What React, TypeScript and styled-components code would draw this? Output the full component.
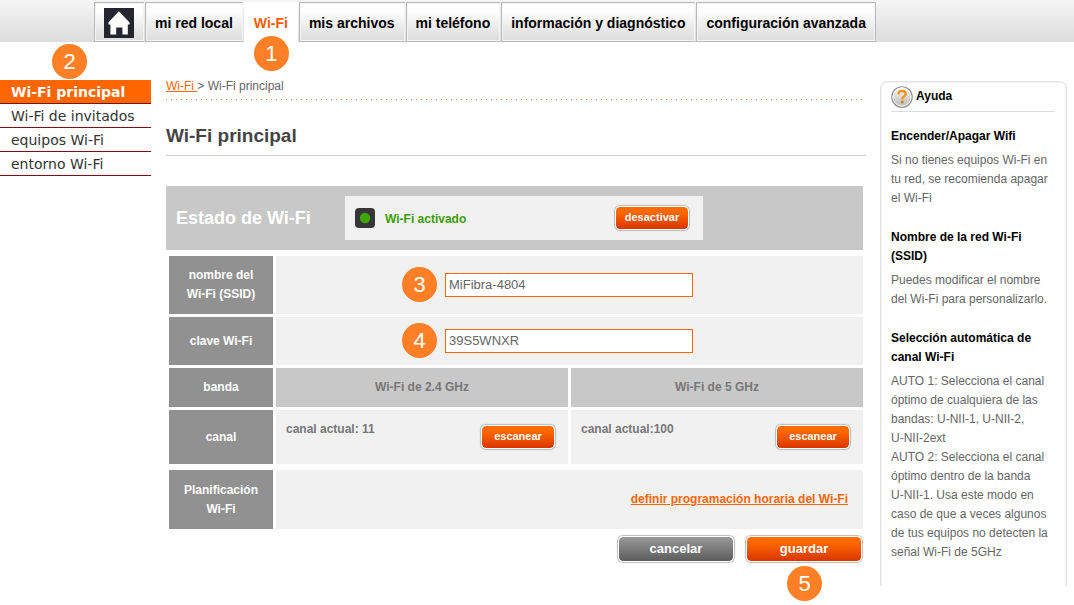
import React from 'react';
import styled, { createGlobalStyle, css } from 'styled-components';

const GlobalStyle = createGlobalStyle`
  * { box-sizing: border-box; }
  body {
    margin: 0;
    background: #fff;
    color: #666;
    font: 12px/19px "Liberation Sans", Arial, Helvetica, sans-serif;
  }
  h1, h2, h3, p, ul { margin: 0; padding: 0; }
`;

const Header = styled.header`
  display: flex;
  height: 42px;
  padding: 2px 0 0 94px;
  background: linear-gradient(#f5f5f5, #dcdcdc);
`;

const Tabs = styled.nav`
  display: flex;
`;

const Tab = styled.a<{ $active?: boolean }>`
  display: flex;
  align-items: center;
  margin-right: 1px;
  padding: 2px 10px 0 9px;
  border: 1px solid #b9b9b9;
  border-right: 0;
  box-shadow: inset 0 0 0 1px #f4f4f4;
  background: linear-gradient(#fff 20%, #ececec 60%, #dcdcdc);
  color: #000;
  font-size: 14px;
  font-weight: bold;
  text-decoration: none;
  white-space: nowrap;
  &:last-child {
    margin-right: 0;
    padding-right: 9px;
    border-right: 1px solid #b9b9b9;
  }
  ${(p) =>
    p.$active &&
    css`
      position: relative;
      padding: 2px 10px 0 9px;
      border-color: #fff;
      background: #fff;
      box-shadow: none;
      color: #ff5a00;
    `}
`;

const Body = styled.div`
  display: flex;
  align-items: flex-start;
  padding: 0 7px 19px 0;
`;

const Side = styled.nav`
  position: relative;
  flex: 0 0 151px;
  padding-top: 38px;
`;

const SideLink = styled.a<{ $active?: boolean }>`
  display: block;
  height: 24px;
  padding-left: 11px;
  border-bottom: 1px solid #7d1010;
  color: #333;
  font: 14px/24px "DejaVu Sans", Verdana, sans-serif;
  text-decoration: none;
  white-space: nowrap;
  ${(p) =>
    p.$active &&
    css`
      background: #ff6600;
      color: #fff;
      font-weight: bold;
    `}
`;

const Main = styled.main`
  flex: 1;
  min-width: 0;
  margin: 35px 14px 0 15px;
`;

const Crumbs = styled.div`
  height: 23px;
  margin-right: 3px;
  background: repeating-linear-gradient(to right, #e87a3a 0 1px, transparent 1px 5px) left bottom / 100% 1px no-repeat;
  a { color: #ff6600; }
`;

const Title = styled.h1`
  height: 56px;
  border-bottom: 1px solid #ccc;
  color: #444;
  font-size: 19px;
  line-height: 72px;
`;

const Status = styled.section`
  display: flex;
  align-items: center;
  height: 64px;
  margin: 30px 3px 3px 0;
  padding-left: 10px;
  background: #c8c8c8;
`;

const StatusTitle = styled.h2`
  flex: 0 0 169px;
  color: #fff;
  font-size: 18px;
`;

const StatusPanel = styled.div`
  display: flex;
  align-items: center;
  gap: 10px;
  width: 358px;
  height: 44px;
  padding: 0 14px 0 10px;
  background: #f1f1f1;
`;

const StatusText = styled.strong`
  flex: 1;
  padding-top: 2px;
  color: #3a9e00;
`;

const Button = styled.button<{ $large?: boolean; $gray?: boolean }>`
  width: ${(p) => (p.$large ? 116 : 74)}px;
  height: ${(p) => (p.$large ? 26 : 24)}px;
  padding: 0 0 2px;
  border: 1px solid #fff;
  border-radius: 5px;
  box-shadow: 0 0 1px 1px #bbb;
  background: ${(p) => (p.$gray ? 'linear-gradient(#999, #5c5c5c)' : 'linear-gradient(#ff6a00 20%, #d93600)')};
  background-clip: padding-box;
  color: #fff;
  font: bold ${(p) => (p.$large ? 13 : 11)}px "Liberation Sans", Arial, sans-serif;
`;

const Table = styled.table`
  width: 100%;
  border-collapse: separate;
  border-spacing: 3px;
  table-layout: fixed;
  td, th { padding: 0; }
`;

const LabelCol = styled.col`
  width: 104px;
`;

const Row = styled.tr<{ $height: number }>`
  height: ${(p) => p.$height}px;
`;

const Label = styled.th`
  background: #919191;
  color: #fff;
`;

const Band = styled.th`
  background: #c8c8c8;
  color: #777;
`;

const Cell = styled.td`
  background: #f1f1f1;
`;

const Field = styled.div`
  position: relative;
  width: 248px;
  margin: 0 auto 0 169px;
`;

const Input = styled.input`
  display: block;
  width: 100%;
  height: 24px;
  padding: 0 3px 2px;
  border: 1px solid #ff6600;
  background: #fff;
  color: #666;
  font: 13px "Liberation Sans", Arial, sans-serif;
`;

const Channel = styled.div`
  display: flex;
  justify-content: space-between;
  align-items: center;
  padding: 0 13px 0 10px;
  color: #777;
  font-weight: bold;
  span { align-self: flex-start; margin-top: -5px; }
`;

const Schedule = styled.div`
  padding-right: 15px;
  text-align: right;
  font-weight: bold;
  a { color: #ff6600; }
`;

const Actions = styled.div`
  display: flex;
  justify-content: flex-end;
  gap: 12px;
  padding: 4px 4px 0 0;
`;

const ActionWrap = styled.div`
  position: relative;
`;

const Help = styled.aside`
  flex: 0 0 187px;
  margin-top: 39px;
  padding: 0 11px 4px 10px;
  border: 1px solid #e2e2e2;
  border-bottom: 0;
  border-radius: 7px 7px 0 0;
  box-shadow: inset 1px 1px 0 #f4f4f4, inset -1px 0 0 #f4f4f4;
`;

const HelpHead = styled.h2`
  display: flex;
  align-items: center;
  gap: 3px;
  height: 30px;
  margin-bottom: 15px;
  border-bottom: 1px solid #ddd;
  color: #000;
  font-size: 12px;
`;

const HelpItem = styled.section`
  margin: 0 -3px 20px 0;
  h3 {
    margin-bottom: 5px;
    color: #000;
    font-size: 12px;
  }
`;

const Badge = styled.span<{ $x: number; $y: number }>`
  position: absolute;
  z-index: 1;
  left: ${(p) => p.$x}px;
  top: ${(p) => p.$y}px;
  width: 35px;
  height: 35px;
  border-radius: 50%;
  background: #ff7f27;
  color: #fff;
  font: 22px/35px "Liberation Sans", Arial, sans-serif;
  text-align: center;
`;

const HomeIcon = () => (
  <svg width="30" height="30" viewBox="0 0 30 30" role="img" aria-label="inicio">
    <rect width="30" height="30" fill="#25252f" />
    <path d="M14.8 3.2 L25.6 14.6 V16.4 H23.8 V26.6 H18.4 V19.6 H12.2 V26.6 H6.4 V16.4 H4.4 V14.6 Z" fill="#fff" />
  </svg>
);

const HelpIcon = () => (
  <svg width="22" height="22" viewBox="0 0 23 23" aria-hidden="true">
    <defs>
      <linearGradient id="knob" x1="0" y1="0" x2="0" y2="1">
        <stop offset="0" stopColor="#fafafa" />
        <stop offset="1" stopColor="#b8b8b8" />
      </linearGradient>
    </defs>
    <circle cx="11.5" cy="11.5" r="10.7" fill="url(#knob)" stroke="#8f8f8f" strokeWidth="1.2" />
    <circle cx="11.5" cy="11.5" r="9.5" fill="none" stroke="#fff" strokeWidth="1" />
    <path d="M8 9 V7.8 C8 4.4 15.4 4.2 15.4 8.2 C15.4 11 11.8 10.8 11.8 14" fill="none" stroke="#f0961a" strokeWidth="2.5" />
    <rect x="10.4" y="15.4" width="2.8" height="2.7" fill="#d9820c" />
  </svg>
);

export default function App() {
  return (
    <>
      <GlobalStyle />
      <Header>
        <Tabs>
          <Tab href="#inicio"><HomeIcon /></Tab>
          <Tab href="#red">mi red local</Tab>
          <Tab href="#wifi" $active>
            Wi-Fi
            <Badge $x={9} $y={33}>1</Badge>
          </Tab>
          <Tab href="#archivos">mis archivos</Tab>
          <Tab href="#telefono">mi teléfono</Tab>
          <Tab href="#diagnostico">información y diagnóstico</Tab>
          <Tab href="#avanzada">configuración avanzada</Tab>
        </Tabs>
      </Header>
      <Body>
        <Side>
          <Badge $x={52} $y={2}>2</Badge>
          <SideLink href="#principal" $active>Wi-Fi principal</SideLink>
          <SideLink href="#invitados">Wi-Fi de invitados</SideLink>
          <SideLink href="#equipos">equipos Wi-Fi</SideLink>
          <SideLink href="#entorno">entorno Wi-Fi</SideLink>
        </Side>
        <Main>
          <Crumbs>
            <a href="#wifi">Wi-Fi&nbsp;</a>&gt; Wi-Fi principal
          </Crumbs>
          <Title>Wi-Fi principal</Title>
          <Status>
            <StatusTitle>Estado de Wi-Fi</StatusTitle>
            <StatusPanel>
              <svg width="20" height="20" viewBox="0 0 20 20" aria-hidden="true">
                <rect width="20" height="20" rx="4" fill="#363636" />
                <circle cx="10" cy="10" r="5.2" fill="#3fa800" />
              </svg>
              <StatusText>Wi-Fi activado</StatusText>
              <Button type="button">desactivar</Button>
            </StatusPanel>
          </Status>
          <Table>
            <colgroup>
              <LabelCol />
              <col />
              <col />
            </colgroup>
            <tbody>
              <Row $height={58}>
                <Label scope="row"><label htmlFor="ssid">nombre del<br />Wi-Fi (SSID)</label></Label>
                <Cell colSpan={2}>
                  <Field>
                    <Badge $x={-43} $y={-6}>3</Badge>
                    <Input id="ssid" defaultValue="MiFibra-4804" />
                  </Field>
                </Cell>
              </Row>
              <Row $height={48}>
                <Label scope="row"><label htmlFor="clave">clave Wi-Fi</label></Label>
                <Cell colSpan={2}>
                  <Field>
                    <Badge $x={-43} $y={-6}>4</Badge>
                    <Input id="clave" defaultValue="39S5WNXR" />
                  </Field>
                </Cell>
              </Row>
              <Row $height={39}>
                <Label scope="row">banda</Label>
                <Band scope="col">Wi-Fi de 2.4 GHz</Band>
                <Band scope="col">Wi-Fi de 5 GHz</Band>
              </Row>
              <Row $height={54}>
                <Label scope="row">canal</Label>
                <Cell>
                  <Channel><span>canal actual: 11</span><Button type="button">escanear</Button></Channel>
                </Cell>
                <Cell>
                  <Channel><span>canal actual:100</span><Button type="button">escanear</Button></Channel>
                </Cell>
              </Row>
            </tbody>
          </Table>
          <Table>
            <colgroup>
              <LabelCol />
              <col />
            </colgroup>
            <tbody>
              <Row $height={59}>
                <Label scope="row">Planificación<br />Wi-Fi</Label>
                <Cell>
                  <Schedule><a href="#horario">definir programación horaria del Wi-Fi</a></Schedule>
                </Cell>
              </Row>
            </tbody>
          </Table>
          <Actions>
            <Button type="button" $large $gray>cancelar</Button>
            <ActionWrap>
              <Button type="submit" $large>guardar</Button>
              <Badge $x={41} $y={30}>5</Badge>
            </ActionWrap>
          </Actions>
        </Main>
        <Help>
          <HelpHead><HelpIcon />Ayuda</HelpHead>
          <HelpItem>
            <h3>Encender/Apagar Wifi</h3>
            <p>Si no tienes equipos Wi-Fi en tu red, se recomienda apagar el Wi-Fi</p>
          </HelpItem>
          <HelpItem>
            <h3>Nombre de la red Wi-Fi (SSID)</h3>
            <p>Puedes modificar el nombre del Wi-Fi para personalizarlo.</p>
          </HelpItem>
          <HelpItem>
            <h3>Selección automática de canal Wi-Fi</h3>
            <p>
              AUTO 1: Selecciona el canal óptimo de cualquiera de las bandas: U-NII-1, U-NII-2,
              <br />
              U-NII-2ext
            </p>
            <p>
              AUTO 2: Selecciona el canal óptimo dentro de la banda
              <br />
              U-NII-1. Usa este modo en caso de que a veces algunos de tus equipos no detecten la
              señal Wi-Fi de 5GHz
            </p>
          </HelpItem>
        </Help>
      </Body>
    </>
  );
}
